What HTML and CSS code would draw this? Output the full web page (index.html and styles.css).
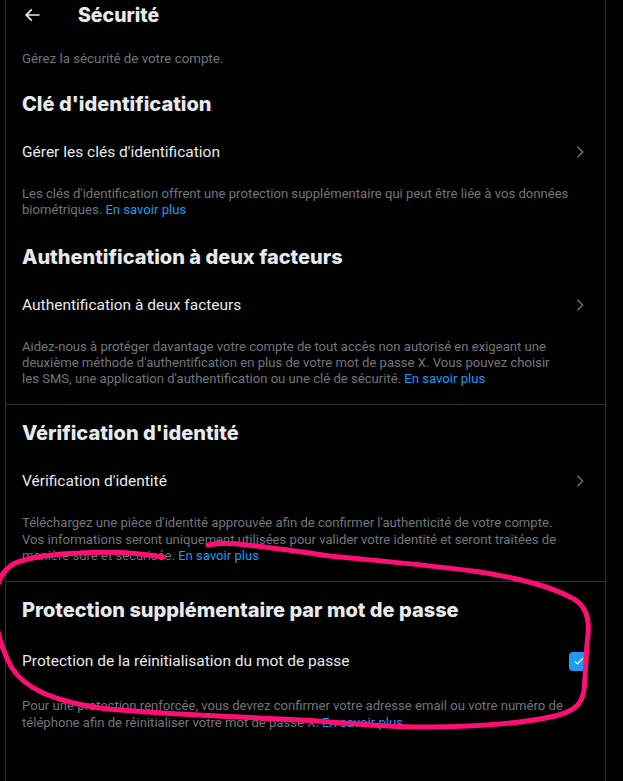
FILE: index.html
```html
<!DOCTYPE html>
<html lang="fr">
<head>
<meta charset="utf-8">
<title>Sécurité</title>
<link rel="stylesheet" href="styles.css">
</head>
<body>
<div class="column">
  <header class="topbar">
    <span class="back">
      <svg viewBox="0 0 24 24" width="20" height="20"><path d="M7.414 13l5.043 5.04-1.414 1.42L3.586 12l7.457-7.46 1.414 1.42L7.414 11H21v2H7.414z"/></svg>
    </span>
    <h1 class="title">Sécurité</h1>
  </header>

  <p class="intro">Gérez la sécurité de votre compte.</p>

  <section class="section">
    <h2 class="heading tight">Clé d'identification</h2>
    <div class="row"><span>Gérer les clés d'identification</span>
      <svg class="chev" viewBox="0 0 24 24" width="16" height="16"><path d="M14.586 12L7.543 4.96l1.414-1.42L17.414 12l-8.457 8.46-1.414-1.42L14.586 12z"/></svg>
    </div>
    <p class="desc">Les clés d'identification offrent une protection supplémentaire qui peut être liée à vos données biométriques. <a href="#">En savoir plus</a></p>
  </section>

  <section class="section">
    <h2 class="heading tight">Authentification à deux facteurs</h2>
    <div class="row"><span>Authentification à deux facteurs</span>
      <svg class="chev" viewBox="0 0 24 24" width="16" height="16"><path d="M14.586 12L7.543 4.96l1.414-1.42L17.414 12l-8.457 8.46-1.414-1.42L14.586 12z"/></svg>
    </div>
    <p class="desc">Aidez-nous à protéger davantage votre compte de tout accès non autorisé en exigeant une deuxième méthode d'authentification en plus de votre mot de passe X. Vous pouvez choisir<br>les SMS, une application d'authentification ou une clé de sécurité. <a href="#">En savoir plus</a></p>
  </section>

  <section class="section divided">
    <h2 class="heading">Vérification d'identité</h2>
    <div class="row"><span>Vérification d'identité</span>
      <svg class="chev" viewBox="0 0 24 24" width="16" height="16"><path d="M14.586 12L7.543 4.96l1.414-1.42L17.414 12l-8.457 8.46-1.414-1.42L14.586 12z"/></svg>
    </div>
    <p class="desc">Téléchargez une pièce d'identité approuvée afin de confirmer l'authenticité de votre compte.<br>Vos informations seront uniquement utilisées pour valider votre identité et seront traitées de manière sûre et sécurisée. <a href="#">En savoir plus</a></p>
  </section>

  <section class="section divided">
    <h2 class="heading">Protection supplémentaire par mot de passe</h2>
    <div class="row tall"><span>Protection de la réinitialisation du mot de passe</span>
      <span class="check"><svg viewBox="0 0 24 24" width="14" height="14"><path d="M5 12.5l4.5 4.5L19 6.5" fill="none" stroke="#fff" stroke-width="2"/></svg></span>
    </div>
    <p class="desc">Pour une protection renforcée, vous devrez confirmer votre adresse email ou votre numéro de téléphone afin de réinitialiser votre mot de passe X. <a href="#">En savoir plus</a></p>
  </section>
</div>

<svg class="annotation" viewBox="0 0 623 781" width="623" height="781">
  <path d="M163 557 C140 553 110 551 80 553 C55 554 30 557 15 563 C2 570 -5 585 -5 605 C-5 630 2 650 12 668 C25 688 50 700 100 708 C140 713 200 715 300 720 C350 723 380 727 420 727 C470 727 520 724 555 716 C575 711 582 704 584 690 C586 670 586 650 588 635 C590 615 584 603 570 597 C555 589 530 580 480 572 C430 565 380 561 330 556 C300 552 270 547 247 545 C230 543 218 543 208 545" fill="none" stroke="#ff0f73" stroke-width="5" stroke-linecap="round" stroke-linejoin="round"/>
</svg>
</body>
</html>
```

FILE: styles.css
```css
html, body {
  margin: 0;
  padding: 0;
  background: #000;
}

body {
  font-family: Roboto, "Noto Sans", "Liberation Sans", sans-serif;
  color: #e7e9ea;
  position: relative;
  min-height: 781px;
}

.column {
  box-sizing: border-box;
  margin-left: 5px;
  width: 601px;
  min-height: 781px;
  border-left: 1px solid #2f3336;
  border-right: 1px solid #2f3336;
}

.topbar {
  display: flex;
  align-items: center;
  height: 29px;
  padding-left: 16px;
}

.back {
  display: flex;
  width: 56px;
}

.back svg {
  fill: #e7e9ea;
}

.title {
  margin: 0;
  font-family: Inter, Roboto, sans-serif;
  font-size: 19.5px;
  line-height: 24px;
  font-weight: 800;
}

.intro {
  margin: 0;
  padding: 22px 16px 16px;
  font-size: 13.3px;
  line-height: 16px;
  color: #71767b;
}

.section.divided {
  border-top: 1px solid #2f3336;
}

.heading {
  margin: 0;
  padding: 16px 16px 10px;
  font-family: Inter, Roboto, sans-serif;
  font-size: 20px;
  line-height: 24px;
  font-weight: 800;
}

.heading.tight {
  padding-top: 9px;
}

.row {
  display: flex;
  align-items: center;
  justify-content: space-between;
  height: 52px;
  padding: 0 17px 0 16px;
  font-size: 15.5px;
  line-height: 20px;
}

.row.tall {
  height: 58px;
}

.chev {
  fill: #71767b;
}

.check {
  display: flex;
  align-items: center;
  justify-content: center;
  width: 19px;
  height: 19px;
  border-radius: 4px;
  background: #1d9bf0;
}

.desc {
  margin: 0;
  padding: 8px 16px 17px;
  font-size: 13.1px;
  line-height: 16.3px;
  color: #71767b;
}

.desc a {
  color: #1d9bf0;
  text-decoration: none;
}

.annotation {
  position: absolute;
  left: 0;
  top: 0;
  pointer-events: none;
}
```
